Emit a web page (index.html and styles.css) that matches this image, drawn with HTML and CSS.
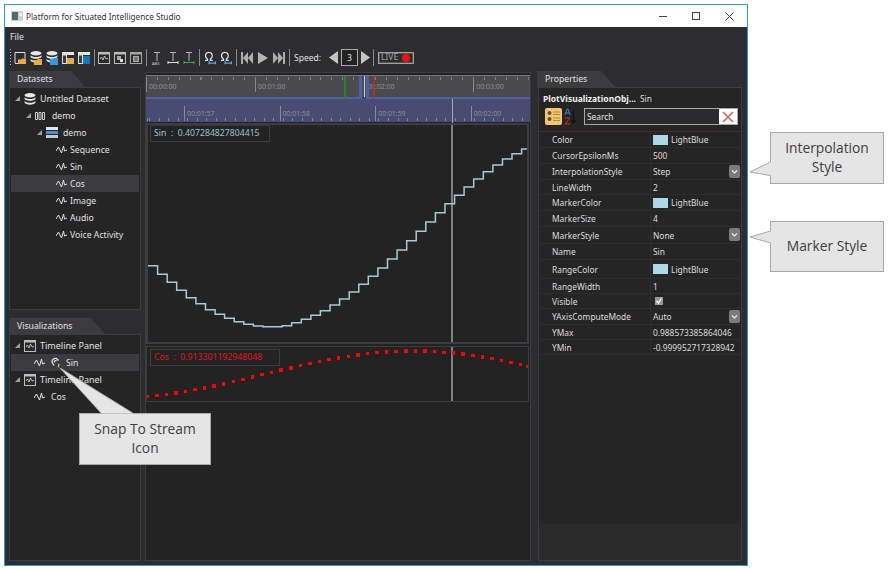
FILE: index.html
```html
<!DOCTYPE html>
<html lang="en">
<head>
  <meta charset="UTF-8">
  <title>Platform for Situated Intelligence Studio</title>
  <link rel="stylesheet" href="styles.css">
</head>
<body>

  <!-- shared icons -->
  <svg class="defs" width="0" height="0">
    <symbol id="wave" viewBox="0 0 11 9">
      <path d="M0 6L2.5 2L4.5 6L5.500 8L7.500 1L8.500 6L11 5" fill="none" stroke="#e2e2e2" stroke-width="1"/>
    </symbol>
    <symbol id="frame-wave" viewBox="0 0 12 12">
      <rect x=".5" y=".5" width="11" height="11" fill="#2a2a2a" stroke="#bdbdbd"/>
      <rect x=".5" y=".5" width="11" height="2" fill="#bdbdbd"/>
      <path d="M2 7L3.500 5L5 8L6.500 4L8 7L10 6.500" fill="none" stroke="#dcdcdc" stroke-width=".8"/>
    </symbol>
    <symbol id="db" viewBox="0 0 12 12">
      <ellipse cx="6" cy="2.200" rx="5.500" ry="2.200" fill="#e8e8e8"/>
      <path d="M.5 4.200C2 6.600 10 6.600 11.500 4.200V6C10 8.400 2 8.400 .5 6Z" fill="#e8e8e8"/>
      <path d="M.5 8C2 10.400 10 10.400 11.500 8V9.600C10 12.400 2 12.400 .5 9.600Z" fill="#e8e8e8"/>
    </symbol>
    <symbol id="table" viewBox="0 0 12 12">
      <rect x="0" y="0" width="12" height="3" fill="#e8e8e8"/>
      <rect x=".5" y="3" width="4" height="8.500" fill="#3a3a3a" stroke="#e0e0e0"/>
    </symbol>
    <symbol id="omega" viewBox="0 0 13 14">
      <path d="M1 9.500H3.800V8.200C.3 6 1.300 .8 5.300 .8S10.300 6 6.800 8.200V9.500H9.500" fill="none" stroke="#e0e0e0" stroke-width="1.300"/>
      <path d="M5.500 12.500H12.500M5.500 10.500V14M12.500 10.500V14" stroke="#4aa8f0" stroke-width="1.400" fill="none"/>
    </symbol>
    <symbol id="t-mark" viewBox="0 0 12 14">
      <path d="M3 1.500H9M6 1.500V10" stroke="#b8b8b8" fill="none"/>
    </symbol>
    <symbol id="arrow" viewBox="0 0 5 5">
      <path d="M5 0V5H0Z" fill="#a0a0a0"/>
    </symbol>
  </svg>

  <div class="window">
    <div class="titlebar">
      <svg class="app-icon" width="12" height="10" viewBox="0 0 12 10">
        <rect width="12" height="10" fill="#c9d3d3"/>
        <rect x="1" y="1" width="6" height="8" fill="#4e6b70"/>
        <rect x="8" y="2" width="3" height="3" fill="#eef2f2"/>
      </svg>
      <span class="title">Platform for Situated Intelligence Studio</span>
      <div class="win-controls">
        <svg width="9" height="9" viewBox="0 0 9 9"><path d="M0 4.500H8" stroke="#444"/></svg>
        <svg width="9" height="9" viewBox="0 0 9 9"><rect x=".5" y=".5" width="7" height="7" fill="none" stroke="#444"/></svg>
        <svg width="9" height="9" viewBox="0 0 9 9"><path d="M.5 .5L8.500 8.500M8.500 .5L.5 8.500" stroke="#444"/></svg>
      </div>
    </div>

    <div class="menubar">File</div>

    <div class="toolbar">
      <span class="grip"></span>
      <svg class="tool" viewBox="0 0 12 14"><path d="M1 12V1.500H11V7" fill="none" stroke="#ddd"/><path d="M1 12.500H5" stroke="#ddd"/><path d="M4 13V8.500H7L8 7.500H12V13Z" fill="#f2a93b"/></svg>
      <svg class="tool" viewBox="0 0 12 14"><use href="#db" y="0" width="12" height="12"/><path d="M4 14V9H7L8 8H12V14Z" fill="#f2a93b"/></svg>
      <svg class="tool" viewBox="0 0 12 14"><use href="#db" y="0" width="12" height="12"/><path d="M4 14V8H7L8 7H12V14Z" fill="#2f97e6"/></svg>
      <svg class="tool" viewBox="0 0 12 14"><use href="#table" y="1" width="12" height="12"/><path d="M5 13V7H12V13Z" fill="#f2a93b"/></svg>
      <svg class="tool" viewBox="0 0 12 14"><use href="#table" y="1" width="12" height="12"/><path d="M5 13V5H12V13Z" fill="#0f77c4"/></svg>
      <span class="sep first"></span>
      <svg class="tool" viewBox="0 0 12 14"><use href="#frame-wave" y="1" width="12" height="12"/></svg>
      <svg class="tool" viewBox="0 0 12 14"><rect x=".5" y="1.500" width="11" height="11" fill="#2a2a2a" stroke="#bdbdbd"/><rect x=".5" y="1.500" width="11" height="2" fill="#bdbdbd"/><rect x="3" y="5" width="4" height="4" fill="#aaa"/><rect x="6" y="8" width="3" height="3" fill="#ddd"/></svg>
      <svg class="tool" viewBox="0 0 12 14"><rect x=".5" y="1.500" width="11" height="11" fill="#2a2a2a" stroke="#a5a5a5"/><rect x=".5" y="1.500" width="11" height="2" fill="#a5a5a5"/><rect x="3.500" y="5.500" width="5" height="5" fill="#777" stroke="#aaa"/></svg>
      <span class="sep"></span>
      <svg class="tool" viewBox="0 0 12 14"><use href="#t-mark" width="12" height="14"/><text x="1" y="14" class="abs">ABS</text></svg>
      <svg class="tool" viewBox="0 0 12 14"><use href="#t-mark" width="12" height="14"/><path d="M1 11.500H11M1 10V13M11 10V13" stroke="#ddd" fill="none"/></svg>
      <svg class="tool" viewBox="0 0 12 14"><use href="#t-mark" width="12" height="14"/><path d="M1 11.500H11M1 10V13M11 10V13" stroke="#35b34a" fill="none"/></svg>
      <span class="sep"></span>
      <svg class="tool" viewBox="0 0 13 14"><use href="#omega" width="13" height="14"/></svg>
      <svg class="tool" viewBox="0 0 13 14"><use href="#omega" width="13" height="14"/></svg>
      <span class="sep"></span>
      <svg class="tool" viewBox="0 0 12 12"><path d="M0 0H2V12H0ZM2 6L7 0V12ZM7 6L12 0V12Z" fill="#adadad"/></svg>
      <svg class="tool" viewBox="0 0 12 12"><path d="M1 0L11 6L1 12Z" fill="#b5b5b5"/></svg>
      <svg class="tool" viewBox="0 0 12 12"><path d="M12 0H10V12H12ZM10 6L5 0V12ZM5 6L0 0V12Z" fill="#adadad"/></svg>
      <span class="sep"></span>
      <span class="speed">Speed:</span>
      <svg class="spin" width="9" height="13" viewBox="0 0 9 13"><path d="M9 0V13L0 6.500Z" fill="#c4c4c4"/></svg>
      <span class="speed-val">3</span>
      <svg class="spin" width="9" height="13" viewBox="0 0 9 13"><path d="M0 0V13L9 6.500Z" fill="#c4c4c4"/></svg>
      <span class="sep"></span>
      <span class="live">LIVE<i class="live-dot"></i></span>
    </div>

    <div class="columns">
      <div class="col-left">
        <div class="tab tab-datasets">Datasets</div>
        <div class="panel tree datasets">
          <div class="row root"><svg class="arr"><use href="#arrow"/></svg><svg class="ic-db"><use href="#db"/></svg><span>Untitled Dataset</span></div>
          <div class="row lv1"><svg class="arr"><use href="#arrow"/></svg><svg class="ic-part" viewBox="0 0 10 8"><path d="M.5 .5H2.500V7.500H.5ZM4 .5H6V7.500H4ZM7.500 .5H9.500V7.500H7.500Z" fill="none" stroke="#cfcfcf"/></svg><span>demo</span></div>
          <div class="row lv2"><svg class="arr"><use href="#arrow"/></svg><svg class="ic-stack" viewBox="0 0 12 12"><rect width="12" height="3" fill="#e6e6e6"/><rect y="4" width="12" height="3" fill="#3f8fdc"/><rect y="8" width="12" height="3" fill="#c8c8c8"/></svg><span>demo</span></div>
          <div class="row lv3"><svg class="ic-wave"><use href="#wave"/></svg><span>Sequence</span></div>
          <div class="row lv3"><svg class="ic-wave"><use href="#wave"/></svg><span>Sin</span></div>
          <div class="row lv3 sel"><svg class="ic-wave"><use href="#wave"/></svg><span>Cos</span></div>
          <div class="row lv3"><svg class="ic-wave"><use href="#wave"/></svg><span>Image</span></div>
          <div class="row lv3"><svg class="ic-wave"><use href="#wave"/></svg><span>Audio</span></div>
          <div class="row lv3"><svg class="ic-wave"><use href="#wave"/></svg><span>Voice Activity</span></div>
        </div>
        <div class="tab tab-vis">Visualizations</div>
        <div class="panel tree vis">
          <div class="row root"><svg class="arr"><use href="#arrow"/></svg><svg class="ic-frame"><use href="#frame-wave"/></svg><span>Timeline Panel</span></div>
          <div class="row child sel"><svg class="ic-wave"><use href="#wave"/></svg><svg class="ic-magnet" viewBox="0 0 10 11"><path d="M3 8.500L1.200 5.500C.5 3 3 .8 5.500 1.500L7.500 3.500M3.500 5.500C3 4 4.500 3 5.500 4" fill="none" stroke="#e4e4e4" stroke-width="1.300"/><path d="M7 7L8.500 8L7 9L8 10.500" fill="none" stroke="#e2d24a" stroke-width="1"/></svg><span>Sin</span></div>
          <div class="row root"><svg class="arr"><use href="#arrow"/></svg><svg class="ic-frame"><use href="#frame-wave"/></svg><span>Timeline Panel</span></div>
          <div class="row child"><svg class="ic-wave"><use href="#wave"/></svg><span>Cos</span></div>
        </div>
      </div>

      <div class="col-mid">
        <div class="timeline">
          <div class="ruler ruler-top">
            <span class="mark wide">00:00:00</span>
            <span class="mark wide">00:01:00</span>
            <span class="mark wide">00:02:00</span>
            <span class="mark wide">00:03:00</span>
          </div>
          <div class="range-line"></div>
          <div class="ruler ruler-bottom">
            <span class="mark">00:01:57</span>
            <span class="mark">00:01:58</span>
            <span class="mark">00:01:59</span>
            <span class="mark">00:02:00</span>
          </div>
          <i class="cur cur-green"></i>
          <i class="cur cur-red"></i>
          <i class="cur cur-white"></i>
          <i class="cur cur-blue1"></i>
          <i class="cur cur-blue2"></i>
          <i class="cur cur-gap"></i>
          <i class="cur cur-now"></i>
        </div>

        <div class="chart chart-sin">
          <div class="legend legend-sin">Sin &nbsp;:&nbsp; 0.407284827804415</div>
          <svg width="379" height="217" viewBox="148 126 379 217">
            <path d="M452 126V343" stroke="#a0a0a0" stroke-width="1.500"/>
            <path fill="none" stroke="#a3cbd9" stroke-width="1.500" d="M148 266.700H157.600V275.300H167.200V283.300H176.700V291.300H186.300V298.700H195.900V304.700H205.500V310.700H215.100V315.300H224.600V319.300H234.200V322.700H243.800V325.300H253.400V327H263V327.700H272.500V327.700H282.100V326.700H291.700V323.700H301.300V320.300H310.900V316.300H320.400V311.700H330V306H339.600V300H349.200V293H358.800V285.300H368.300V277.300H377.900V269H387.500V260H397.100V251H406.700V241.700H416.200V232.300H425.800V223H435.400V213.700H445V204.700H454.600V196.300H464.100V188H473.700V180H483.300V172.700H492.900V166H502.500V160H512V154.700H521.600V150H527"/>
          </svg>
        </div>

        <div class="chart chart-cos">
          <div class="legend legend-cos">Cos &nbsp;:&nbsp; 0.913301192948048</div>
          <svg width="381" height="54" viewBox="147 348 381 54">
            <path d="M452 348V402" stroke="#a0a0a0" stroke-width="1.500"/>
            <path class="dots" fill="none" stroke="#ff0000" stroke-width="3.500" d="M145.500 397.300h3.500M155 396.700h3.500M164.500 395.300h3.500M174 394h3.500M183.600 392.700h3.500M193.200 390.700h3.500M202.800 389h3.500M212.400 387h3.500M221.900 385h3.500M231.500 382.700h3.500M241.100 380.300h3.500M250.700 378h3.500M260.300 375.700h3.500M269.800 373.300h3.500M279.400 371h3.500M289 369h3.500M298.600 366.700h3.500M308.200 364.700h3.500M317.700 362.300h3.500M327.300 360.700h3.500M336.900 359h3.500M346.500 357.300h3.500M356.100 356h3.500M365.600 354.700h3.500M375.200 353.700h3.500M384.800 353h3.500M394.400 352.300h3.500M404 352h3.500M413.500 352h3.500M423.100 352h3.500M432.700 352.700h3.500M442.300 353.300h3.500M451.900 354h3.500M461.400 355h3.500M471 356.700h3.500M480.600 358h3.500M490.200 359.700h3.500M499.800 361.300h3.500M509.300 363.300h3.500M518.900 365.300h3.500M526 367.300h3.500"/>
          </svg>
        </div>
      </div>

      <div class="col-right">
        <div class="tab tab-props">Properties</div>
        <div class="panel props">
          <div class="props-title"><b>PlotVisualizationObj...</b><span>Sin</span></div>
          <div class="props-search">
            <svg class="btn-cat" viewBox="0 0 17 17"><rect width="17" height="17" rx="2" fill="#f4c56a"/><circle cx="4.500" cy="5" r="2" fill="#555"/><circle cx="4.500" cy="11" r="2" fill="#555"/><path d="M8 4H15M8 6.500H15M8 10H15M8 12.500H15" stroke="#b08a3a"/></svg>
            <svg class="btn-az" viewBox="0 0 12 17"><path d="M1 7L3 1H4L6 7M1.500 5H5.500" stroke="#3b7fd0" fill="none"/><path d="M1 10H6L1 16H6" stroke="#d03030" fill="none"/><path d="M9.500 2V14M7.500 12L9.500 15L11.500 12" stroke="#111" fill="none" stroke-width="1.200"/></svg>
            <div class="search">
              <span>Search</span>
              <span class="search-clear"><svg width="12" height="12" viewBox="0 0 12 12"><path d="M1 1L11 11M11 1L1 11" stroke="#e0605c" stroke-width="1.600"/></svg></span>
            </div>
          </div>
          <div class="prop-grid">
            <div class="prop"><span>Color</span><span class="val"><i class="swatch"></i>LightBlue</span></div>
            <div class="prop"><span>CursorEpsilonMs</span><span class="val">500</span></div>
            <div class="prop"><span>InterpolationStyle</span><span class="val">Step<svg class="drop" viewBox="0 0 11 13"><rect width="11" height="13" rx="2" fill="#7c7c7c"/><path d="M3 5.500L5.500 8L8 5.500" fill="none" stroke="#eee" stroke-width="1.200"/></svg></span></div>
            <div class="prop h15"><span>LineWidth</span><span class="val">2</span></div>
            <div class="prop"><span>MarkerColor</span><span class="val"><i class="swatch"></i>LightBlue</span></div>
            <div class="prop"><span>MarkerSize</span><span class="val">4</span></div>
            <div class="prop h17"><span>MarkerStyle</span><span class="val">None<svg class="drop" viewBox="0 0 11 13"><rect width="11" height="13" rx="2" fill="#7c7c7c"/><path d="M3 5.500L5.500 8L8 5.500" fill="none" stroke="#eee" stroke-width="1.200"/></svg></span></div>
            <div class="prop"><span>Name</span><span class="val">Sin</span></div>
            <div class="prop h19"><span>RangeColor</span><span class="val"><i class="swatch"></i>LightBlue</span></div>
            <div class="prop h15"><span>RangeWidth</span><span class="val">1</span></div>
            <div class="prop h15"><span>Visible</span><span class="val"><svg class="check" viewBox="0 0 8 8"><rect width="8" height="8" fill="#9a9a9a"/><path d="M1.500 4L3.300 6L6.500 1.500" fill="none" stroke="#fff" stroke-width="1.200"/></svg></span></div>
            <div class="prop"><span>YAxisComputeMode</span><span class="val">Auto<svg class="drop" viewBox="0 0 11 13"><rect width="11" height="13" rx="2" fill="#7c7c7c"/><path d="M3 5.500L5.500 8L8 5.500" fill="none" stroke="#eee" stroke-width="1.200"/></svg></span></div>
            <div class="prop h15"><span>YMax</span><span class="val">0.988573385864046</span></div>
            <div class="prop h15"><span>YMin</span><span class="val">-0.999952717328942</span></div>
          </div>
          <div class="props-desc"></div>
        </div>
      </div>
    </div>
  </div>

  <!-- annotations over the screenshot -->
  <div class="callout callout-snap">
    <svg class="tail" width="80" height="50" viewBox="0 0 80 50"><path d="M0 0L41.500 45.500H73.500Z" fill="#e5e5e5"/><path d="M41.500 45.500L0 0L73.500 45.500" fill="none" stroke="#b0b0b0"/></svg>
    Snap To Stream<br>Icon
  </div>
  <div class="callout callout-interp">
    <svg class="tail" width="21" height="16" viewBox="0 0 21 16"><path d="M21 0L0 10L21 13.500Z" fill="#e5e5e5"/><path d="M20.500 0L0 10L20.500 13.500" fill="none" stroke="#a8a8a8"/></svg>
    Interpolation<br>Style
  </div>
  <div class="callout callout-marker">
    <svg class="tail" width="21" height="14" viewBox="0 0 21 14"><path d="M21 0L0 6L21 12Z" fill="#e5e5e5"/><path d="M20.500 0L0 6L20.500 12" fill="none" stroke="#a8a8a8"/></svg>
    Marker Style
  </div>

</body>
</html>
```

FILE: styles.css
```css
* { margin: 0; padding: 0; box-sizing: border-box; }
body { width: 892px; height: 570px; background: #fff; font-family: 'Noto Sans', sans-serif; font-size: 8.7px; color: #e0e0e0; position: relative; overflow: hidden; }
.defs { position: absolute; }
svg { display: block; flex: none; }

.window { width: 744px; height: 562px; margin: 4px 0 0 4px; border: 1px solid #2c9ae2; background: #2d2d30; display: flex; flex-direction: column; }

.titlebar { height: 22px; background: #fff; display: flex; align-items: center; padding-left: 6px; color: #333; font-size: 8.2px; flex: none; }
.app-icon { margin-right: 3px; }
.win-controls { margin-left: auto; display: flex; gap: 24px; padding-right: 13px; }

.menubar { height: 20px; line-height: 20px; padding-left: 5px; flex: none; }

.toolbar { height: 21px; display: flex; align-items: center; gap: 4px; padding-left: 5px; flex: none; }
.grip { width: 1px; height: 18px; margin-right: -1px; background: repeating-linear-gradient(to bottom, #bbb 0 1px, transparent 1px 3px); }
.tool { width: 12px; height: 14px; }
.abs { font-size: 4px; fill: #c8c8c8; font-family: 'Noto Sans', sans-serif; }
.sep { width: 1px; height: 17px; background: #8a8a8a; }
.sep.first { margin-right: -1px; }
.speed { margin: 0 5px 0 0; font-size: 8.5px; }
.spin { margin: 0 -1px; }
.speed-val { width: 17px; height: 17px; border: 1px solid #aaa; background: #222; display: flex; align-items: center; justify-content: center; }
.live { width: 36px; height: 12px; border: 1px solid #a0a0a0; box-shadow: inset 0 0 0 1px #555; color: #a0a0a0; display: flex; align-items: center; justify-content: space-between; padding: 0 3px 0 2px; font-size: 8.5px; line-height: 1; }
.live-dot { width: 8px; height: 8px; border-radius: 50%; background: #f01010; }

.columns { flex: 1; display: flex; padding: 3px 4px 4px 4px; gap: 4px; min-height: 0; }
.col-left { width: 132px; flex: none; display: flex; flex-direction: column; }
.col-mid { width: 386px; flex: none; height: 489px; margin-top: 1px; border: 1px solid #3c3c40; background: #232323; padding-top: 2px; }
.col-right { width: 205px; flex: none; margin-left: 2px; display: flex; flex-direction: column; }

.tab { height: 16px; line-height: 16px; padding-left: 8px; background: #3c3c3f; clip-path: polygon(0 0, calc(100% - 14px) 0, 100% 100%, 0 100%); flex: none; }
.tab-datasets { width: 76px; }
.tab-vis { width: 96px; }
.tab-props { width: 78px; }

.panel { background: #252526; border: 1px solid #3c3c40; }
.tree { padding: 2px 1px; }
.datasets { height: 223px; margin-bottom: 8px; }
.vis { flex: 1; }
.row { height: 17px; display: flex; align-items: center; padding-left: 4px; white-space: nowrap; }
.row.root { font-size: 9px; }
.row.sel { background: #3c3c40; }
.arr { width: 5px; height: 5px; margin-right: 4px; }
.ic-db { width: 12px; height: 12px; margin-right: 4px; }
.ic-frame { width: 12px; height: 12px; margin-right: 4px; }
.lv1 { padding-left: 15px; }
.lv2 { padding-left: 26px; }
.lv3 { padding-left: 45px; }
.child { padding-left: 23px; }
.ic-part { width: 10px; height: 8px; margin-right: 7px; }
.ic-stack { width: 12px; height: 12px; margin-right: 5px; }
.ic-wave { width: 11px; height: 9px; margin-right: 3px; }
.child .ic-wave { margin-right: 6px; }
.ic-magnet { width: 10px; height: 11px; margin-right: 5px; }

.timeline { position: relative; }
.ruler { display: flex; position: relative; color: #8e8e8e; font-size: 6.9px; }
.ruler::before { content: ""; position: absolute; left: 0; right: 0; }
.ruler-top { height: 22px; background: #4b4b4d; border-top: 1px solid #7a7a7a; }
.ruler-top::before { top: 1px; height: 3px; background: repeating-linear-gradient(to right, #808080 0 1px, transparent 1px 10.9px); }
.ruler-bottom { height: 23px; background: #494c72; padding-left: 38px; }
.ruler-bottom::before { bottom: 1px; height: 3px; background: repeating-linear-gradient(to right, #7f82a0 0 1px, transparent 1px 9.56px); background-position: 3px 0; }
.mark { border-left: 1px solid #8a8a8a; padding-left: 2px; white-space: nowrap; width: 95.6px; flex: none; height: 15px; margin-top: 7px; line-height: 15px; }
.mark.wide { width: 109.1px; margin-top: 1px; padding-top: 2px; }
.range-line { height: 2px; background: #4f5ea8; }

.cur { position: absolute; display: block; }
.cur-green { left: 198px; top: 1px; width: 2px; height: 23px; background: #2a7f35; }
.cur-red { left: 227px; top: 1px; width: 2px; height: 23px; background: #a5332f; }
.cur-white { left: 218px; top: 1px; width: 1px; height: 23px; background: #d0d0d0; }
.cur-blue1 { left: 213px; top: 1px; width: 3px; height: 23px; background: #4f5ea8; }
.cur-blue2 { left: 220px; top: 1px; width: 3px; height: 23px; background: #4f5ea8; }
.cur-gap { left: 216px; top: 22px; width: 4px; height: 2px; background: #4b4b4d; }
.cur-now { left: 306px; top: 24px; width: 1px; height: 24px; background: #a8a8a8; }

.chart { position: relative; width: 383px; }
.chart-sin { height: 221px; margin-top: 1px; border: 2px solid #3c3c42; }
.chart-cos { height: 56px; margin-top: 2px; border: 1px solid #3c3c40; }
.dots { shape-rendering: crispEdges; }
.legend { position: absolute; height: 17px; line-height: 15px; padding-left: 3px; border: 1px solid #3c3c3c; white-space: nowrap; }
.legend-sin { left: 2px; top: 0; width: 120px; color: #8fc4da; }
.legend-cos { left: 3px; top: 2px; width: 130px; color: #e01414; }

.props { flex: 1; display: flex; flex-direction: column; padding: 0 1px; margin-left: 1px; font-size: 8.4px; }
.props-title { height: 20px; display: flex; align-items: center; gap: 4px; padding-left: 3px; white-space: nowrap; color: #ddd; flex: none; }
.props-title b { color: #f0f0f0; font-size: 8.5px; }
.props-search { display: flex; gap: 2px; padding-left: 5px; border-bottom: 1px solid #4a2b2b; flex: none; height: 24px; }
.btn-cat { width: 17px; height: 17px; }
.btn-az { width: 12px; height: 17px; margin-right: 6px; }
.search { width: 154px; height: 17px; border: 1px solid #a8a8a8; background: #2b2b2d; display: flex; align-items: center; justify-content: space-between; padding-left: 2px; color: #e4e4e4; }
.search-clear { width: 18px; height: 15px; background: #fff; display: flex; align-items: center; justify-content: center; }
.prop-grid { flex: none; }
.prop { height: 16px; display: grid; grid-template-columns: 98px 1fr; align-items: center; border-bottom: 1px solid #2e2e30; padding-left: 12px; color: #dcdcdc; }
.h15 { height: 15px; }
.h17 { height: 17px; }
.h19 { height: 19px; }
.val { height: 100%; display: flex; align-items: center; border-left: 1px solid #2e2e30; padding-left: 2px; position: relative; white-space: nowrap; }
.swatch { width: 15px; height: 10px; background: #add8e6; margin-right: 3px; }
.drop { width: 11px; height: 13px; position: absolute; right: 0; top: 1px; }
.check { width: 8px; height: 8px; margin-left: 2px; }
.props-desc { margin: auto -1px 0; height: 36px; background: #2a2a2b; }

.callout { position: absolute; background: #e5e5e5; border: 1px solid #a8a8a8; color: #404040; font-size: 13.8px; line-height: 19px; padding-bottom: 2px; display: flex; flex-direction: column; justify-content: center; text-align: center; font-family: 'Open Sans', sans-serif; }
.tail { position: absolute; }
.callout-snap { left: 79px; top: 413px; width: 132px; height: 52px; }
.callout-snap .tail { left: -20px; top: -46px; }
.callout-interp { left: 770px; top: 132px; width: 114px; height: 52px; }
.callout-interp .tail { left: -21px; top: 29px; }
.callout-marker { left: 770px; top: 221px; width: 114px; height: 51px; }
.callout-marker .tail { left: -21px; top: 9px; }
```
